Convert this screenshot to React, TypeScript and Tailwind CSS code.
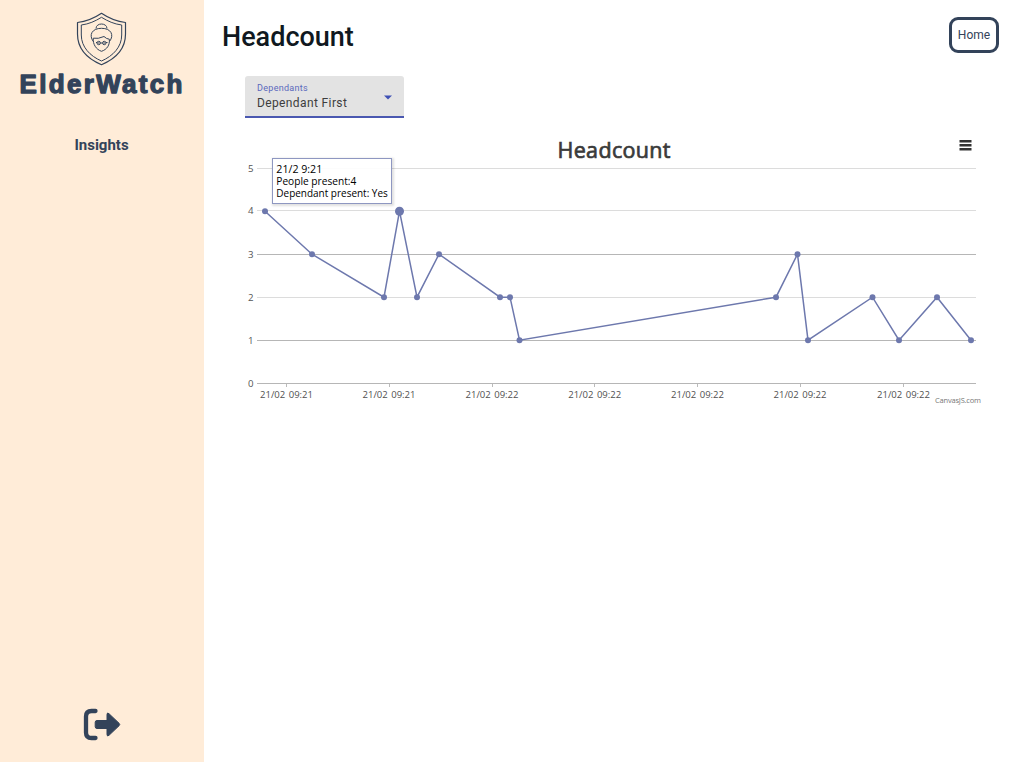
import React from "react";

const points: [number, number][] = [
  [265, 4], [312, 3], [384, 2], [399.5, 4], [417, 2], [439, 3], [500, 2], [510, 2],
  [519.5, 1], [776, 2], [797.5, 3], [808, 1], [872.5, 2], [899, 1], [937, 2], [971, 1],
];

const gridLines = [
  { value: 5, y: 168.5, color: "#dcdcdc" },
  { value: 4, y: 210.5, color: "#dcdcdc" },
  { value: 3, y: 254.5, color: "#b6b6b6" },
  { value: 2, y: 297.5, color: "#dcdcdc" },
  { value: 1, y: 340.5, color: "#b6b6b6" },
  { value: 0, y: 383.5, color: "#b6b6b6" },
];

const ticks = [
  { x: 286.5, label: "21/02 09:21" },
  { x: 389, label: "21/02 09:21" },
  { x: 492, label: "21/02 09:22" },
  { x: 594.7, label: "21/02 09:22" },
  { x: 697.5, label: "21/02 09:22" },
  { x: 800, label: "21/02 09:22" },
  { x: 903.5, label: "21/02 09:22" },
];

const toY = (value: number) => 383 - value * 43;

function Logo() {
  return (
    <svg width="204" height="104" viewBox="0 0 204 104" fill="none" stroke="#33435a" strokeLinejoin="round">
      <path d="M101.5 13.3C94 18.4 86.500 21.500 77.500 22.500V34C77.500 49 88 59 101.500 64.700C115 59 125.500 49 125.500 34V22.500C116.500 21.500 109 18.400 101.500 13.300Z" strokeWidth="1.2" />
      <path d="M101.500 17.300C95 21.300 89 24 81.300 25V35C81.300 47 90 56 101.500 61C113 56 121.700 47 121.700 35V25C114 24 108 21.300 101.500 17.300Z" strokeWidth="1" />
      <path d="M96 28.500C96 22.500 107 22.500 107 28.500M93.300 41.500C88.500 35 92 28.300 101.500 28.300C111 28.300 114.500 35 109.500 41.500" strokeWidth="1" />
      <path d="M93.300 38.200Q98 39.200 104 36.500Q106.500 39 109.300 39.200C110 45 107 49.500 101.500 51.300C96 49.500 92.700 44 93.300 38.200Z" strokeWidth="1" />
      <circle cx="98.700" cy="43" r="1.700" strokeWidth="1" />
      <circle cx="104.300" cy="43" r="1.700" strokeWidth="1" />
      <path d="M100.500 43H102.500M98 43H99.500M103.500 43H105M96 42.500H97M106 42.500H107.500" strokeWidth="1" />
      <text x="19.500" y="93" textLength="163" fontFamily="'Liberation Sans', sans-serif" fontWeight="700" fontSize="26" fill="#33435a" strokeWidth="1.3">
        ElderWatch
      </text>
    </svg>
  );
}

function LogoutIcon() {
  return (
    <svg width="38" height="34" viewBox="0 0 38 34" fill="none">
      <path d="M12.500 3H8.500Q3 3 3 8.500V24.500Q3 30 8.500 30H12.500" stroke="#33435a" strokeWidth="4.300" strokeLinecap="round" />
      <path d="M14 12.500H24V6.500Q24 4 26 5.700L36 15.200Q37.500 16.500 36 17.800L26 27.300Q24 29 24 26.500V20.500H14Q12.200 20.500 12.200 18.700V14.300Q12.200 12.500 14 12.500Z" fill="#33435a" stroke="#33435a" strokeWidth="1" strokeLinejoin="round" />
    </svg>
  );
}

function HeadcountChart() {
  return (
    <svg className="block font-['Open_Sans',sans-serif]" width="817" height="290" viewBox="204 130 817 290">
      <text x="557.500" y="158" textLength="113" fontSize="21.500" fill="#3a3a3a" stroke="#3a3a3a" strokeWidth=".7">Headcount</text>
      <path d="M959.500 141.300H971.500M959.500 145.300H971.500M959.500 149.300H971.500" stroke="#333" strokeWidth="2.400" />
      {gridLines.map(({ value, y, color }) => (
        <g key={value}>
          <path d={`M257 ${y}H976`} stroke={color} />
          <text x="253.500" y={y + 3} fontSize="9.700" textAnchor="end" fill="#555">{value}</text>
        </g>
      ))}
      {ticks.map(({ x, label }) => (
        <g key={x}>
          <path d={`M${Math.floor(x) + 0.5} 384V387`} stroke="#bbb" />
          <text x={x - 26.500} y="398" textLength="53" lengthAdjust="spacingAndGlyphs" wordSpacing="1" fontSize="9.500" fill="#505050">{label}</text>
        </g>
      ))}
      <polyline points={points.map(([x, v]) => `${x},${toY(v) + 0.2}`).join(" ")} fill="none" stroke="#6d78ad" strokeWidth="1.500" />
      {points.map(([x, v], i) => (
        <circle key={x} cx={x} cy={toY(v) + 0.2} r={i === 3 ? 4.5 : 3} fill="#6d78ad" />
      ))}
      <text x="935" y="403" textLength="46" fontSize="7.500" fill="#777">CanvasJS.com</text>
    </svg>
  );
}

function Tooltip() {
  return (
    <div className="absolute left-[68px] top-[28px] h-[46px] w-[120px] border border-[#8e97c1] bg-white/90 shadow-[1px_1px_2px_1px_rgba(0,0,0,0.12)]">
      <svg width="118" height="44" viewBox="0 0 118 44" className="overflow-visible font-['Open_Sans',sans-serif]" fontSize="10.500" fill="#000">
        <text x="3.300" y="14" textLength="46" lengthAdjust="spacingAndGlyphs">21/2 9:21</text>
        <text x="3.300" y="26" textLength="80" lengthAdjust="spacingAndGlyphs">People present:4</text>
        <text x="3.300" y="38" textLength="111.500" lengthAdjust="spacingAndGlyphs">Dependant present: Yes</text>
      </svg>
    </div>
  );
}

export default function App() {
  return (
    <div className="flex h-[762px] w-[1021px] overflow-hidden bg-white font-[Roboto,sans-serif]">
      <aside className="flex w-[204px] shrink-0 flex-col items-center bg-[#ffecd8]">
        <Logo />
        <a className="mt-[31px] mr-px text-[15px] leading-5 font-bold text-[#33435a]">Insights</a>
        <button className="mt-auto mb-5" aria-label="Log out"><LogoutIcon /></button>
      </aside>
      <main className="flex min-w-0 flex-1 flex-col">
        <header className="flex h-[76px] items-start justify-between pr-[22px] pl-[18px]">
          <h1 className="pt-[21px] text-[27px] leading-8 font-medium text-[#101820]">Headcount</h1>
          <button className="mt-[17px] h-9 w-[50px] rounded-[9px] border-3 border-[#33435a] text-xs text-[#33435a]">Home</button>
        </header>
        <div className="ml-[41px] flex h-[42px] w-[159px] items-center justify-between rounded-t-[3px] border-b-2 border-[#4a58b0] bg-[#e3e3e3] pr-3 pl-3">
          <div className="flex flex-col pt-0.5">
            <label className="text-[9px] leading-3 tracking-[0.3px] text-[#5b69bd]">Dependants</label>
            <span className="text-xs leading-[18px] tracking-[0.38px] text-[#3d3d3d]">Dependant First</span>
          </div>
          <svg width="8" height="5" viewBox="0 0 8 5" className="mt-0.5"><path d="M0 .5H8L4 4.500Z" fill="#3f51b5" /></svg>
        </div>
        <section className="relative mt-3">
          <HeadcountChart />
          <Tooltip />
        </section>
      </main>
    </div>
  );
}
